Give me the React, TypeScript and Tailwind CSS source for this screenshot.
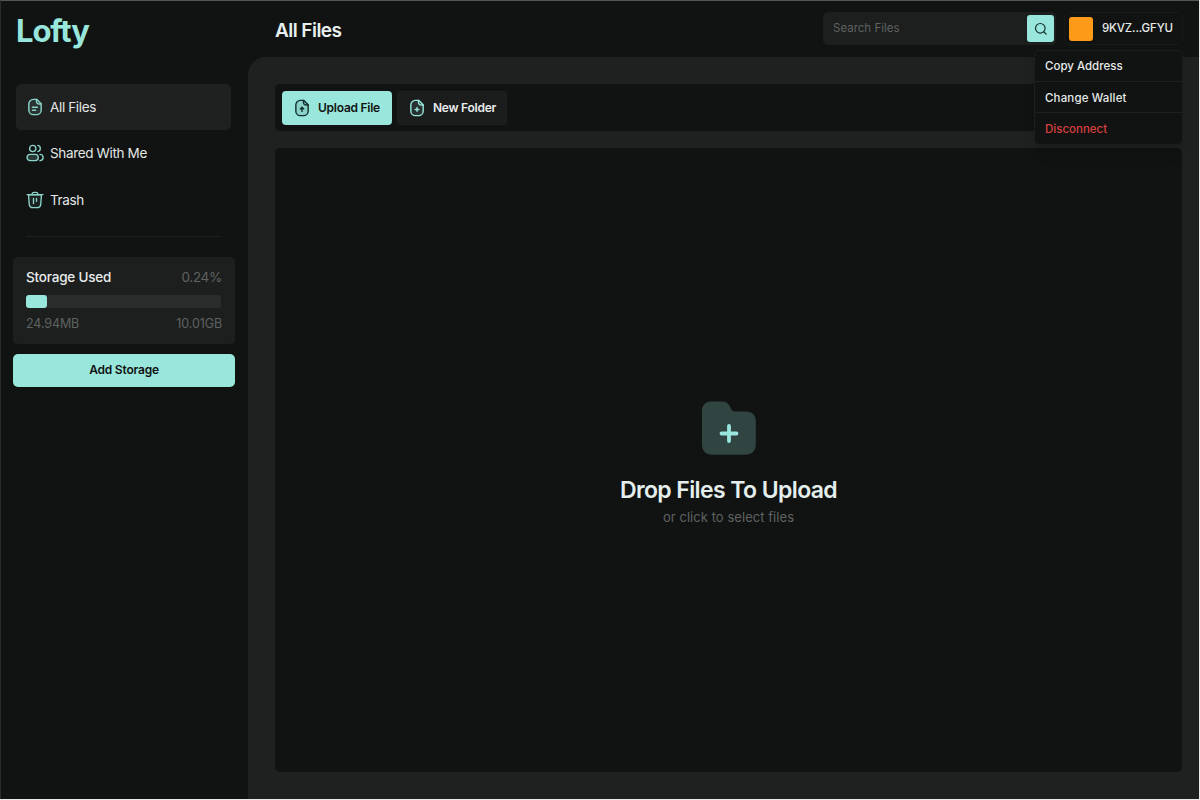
import type { ReactNode } from 'react';

const FILE_BODY = 'M9.8 1.8h4.4L20.2 7.8v8.4a6 6 0 0 1-6 6H9.8a6 6 0 0 1-6-6V7.8a6 6 0 0 1 6-6Z';
const FILE_FOLD = 'M14 2v2.6A3.4 3.4 0 0 0 17.4 8H20';

function FileIcon({ className, children }: { className?: string; children: ReactNode }) {
  return (
    <svg viewBox="0 0 24 24" fill="none" stroke="currentColor" strokeWidth="1.9" strokeLinecap="round" strokeLinejoin="round" className={className}>
      <path d={FILE_BODY} fill="currentColor" fillOpacity="0.1" />
      <path d={FILE_FOLD} />
      {children}
    </svg>
  );
}

function UsersIcon() {
  return (
    <svg viewBox="0 0 24 24" fill="none" stroke="currentColor" strokeWidth="1.8" strokeLinecap="round" strokeLinejoin="round" className="w-[18px] h-[18px]">
      <circle cx="9" cy="6" r="4.2" />
      <rect x="1.4" y="13.8" width="15" height="8.4" rx="4.2" fill="currentColor" fillOpacity="0.2" />
      <path d="M15.8 1.9a4.2 4.2 0 0 1 0 8.2" />
      <path d="M18.6 13.8a4.2 4.2 0 0 1 0 8.4" />
    </svg>
  );
}

function TrashIcon() {
  return (
    <svg viewBox="0 0 24 24" fill="none" stroke="currentColor" strokeWidth="1.8" strokeLinecap="round" strokeLinejoin="round" className="w-[18px] h-[18px]">
      <path d="M3.4 5.2l.9 12.3a5 5 0 0 0 5 4.7h5.4a5 5 0 0 0 5-4.7l.9-12.3Z" fill="currentColor" fillOpacity="0.08" />
      <path d="M1.4 4.8h21.2M7.8 4.4c.4-1.7 1.4-2.6 3-2.6h2.4c1.6 0 2.6.9 3 2.6" />
      <path d="M10 10v6.6M14 10v3.8" />
    </svg>
  );
}

function FolderIcon() {
  return (
    <svg viewBox="0 0 54 54" className="w-[54px] h-[54px]">
      <path d="M0 9a8.5 8.5 0 0 1 8.5-8.5H20c4 0 6.3 1.6 7.8 4.8l1 2.1c.9 2 2.4 3.1 4.7 3.1H44c6.2 0 9.8 3.6 9.8 9.6V43c0 7-4 10.8-10.8 10.8H10.5C3.8 53.8 0 50 0 43.5Z" fill="#304442" />
      <path d="M27 25v15M19.5 32.5h15" stroke="#98e6dc" strokeWidth="3.8" strokeLinecap="round" />
    </svg>
  );
}

const navItems = [
  {
    label: 'All Files',
    active: true,
    icon: (
      <FileIcon className="w-[18px] h-[18px]">
        <path d="M8.6 12.4h6.6M8.6 16.4h4.2" />
      </FileIcon>
    ),
  },
  { label: 'Shared With Me', active: false, icon: <UsersIcon /> },
  { label: 'Trash', active: false, icon: <TrashIcon /> },
];

function Sidebar() {
  return (
    <aside className="w-[248px] shrink-0 flex flex-col pl-3 pt-3">
      <div className="h-[42px] pl-[3px] text-[31px] leading-[36px] font-bold tracking-[-1.1px] text-[#98e6dc]">Lofty</div>

      <nav className="mt-[28.6px] ml-[3px] flex flex-col">
        {navItems.map((item) => (
          <a
            key={item.label}
            href="#"
            className={`flex items-center h-[46.6px] w-[215px] pl-[10px] gap-[6px] rounded-[5px] ${item.active ? 'bg-[#1f2120]' : ''}`}
          >
            <span className="text-[#8cd3ca]">{item.icon}</span>
            <span className="text-[13.5px] tracking-[-0.35px] text-[#e3e7e6]">{item.label}</span>
          </a>
        ))}
      </nav>

      <div className="ml-[13px] mt-[12.6px] h-px w-[195px] bg-[#1e201f]" />

      <section className="mt-5 h-[87px] w-[222px] rounded-[5px] bg-[#1d1f1e] px-[13px] pt-[11px]">
        <div className="flex justify-between text-[13.5px] leading-[18px]">
          <span className="font-medium tracking-[-0.2px] text-[#e8ecec]">Storage Used</span>
          <span className="tracking-[-0.3px] text-[#5e6261]">0.24%</span>
        </div>
        <div className="mt-[9px] h-[13px] w-[195px] rounded-[3px] bg-[#2a2d2c]">
          <div className="h-full w-[21px] rounded-[3px] bg-[#98e6dc]" />
        </div>
        <div className="mt-[7px] flex justify-between text-[12.5px] leading-[18px] tracking-[-0.1px] text-[#5e6261]">
          <span>24.94MB</span>
          <span>10.01GB</span>
        </div>
      </section>

      <button className="mt-[10px] h-[33px] w-[222px] rounded-[5px] bg-[#98e6dc] text-xs font-semibold tracking-[-0.2px] text-[#111312]">
        Add Storage
      </button>
    </aside>
  );
}

function WalletMenu() {
  return (
    <div className="absolute -right-px top-[37px] z-10 w-[149px] rounded-[5px] border border-[#1b1e1d] bg-[#111312] text-[11.5px] font-medium text-[#e6eae9] shadow-lg">
      <div className="h-[31px] px-[10px] leading-[30px] border-b border-[#1e201f]">Copy Address</div>
      <div className="h-[31px] px-[10px] leading-[32px] tracking-[0.15px] border-b border-[#1e201f]">Change Wallet</div>
      <div className="h-[31px] px-[10px] leading-[32px] text-[#d9403f]">Disconnect</div>
    </div>
  );
}

function Header() {
  return (
    <header className="flex h-14 shrink-0 items-start pl-[27px] pr-4">
      <h1 className="mt-4 text-[19px] leading-7 font-semibold tracking-[-0.55px] text-[#e8f0ef]">All Files</h1>
      <div className="ml-auto mt-[11px] flex items-center">
        <div className="flex h-[33px] w-[233px] items-center rounded-[5px] bg-[#1d1f1e] pl-[10px] pr-[2px]">
          <span className="pt-px text-[11.5px] text-[#5e6261]">Search Files</span>
          <button className="ml-auto flex h-[27px] w-[27px] items-center justify-center rounded-[3px] bg-[#98e6dc] text-[#16302d]">
            <svg viewBox="0 0 14 14" fill="none" stroke="currentColor" strokeWidth="1.2" strokeLinecap="round" className="h-[14px] w-[14px]">
              <circle cx="6.3" cy="6.3" r="4.8" />
              <path d="M10 10l2.2 2.2" />
            </svg>
          </button>
        </div>
        <div className="relative ml-2 flex h-[33px] w-[119px] items-center rounded-[5px] border border-[#171918] pl-1">
          <span className="h-6 w-6 shrink-0 rounded-[3px] bg-[#fd9a17]" />
          <span className="ml-[9px] pt-px text-[11.5px] font-medium tracking-[-0.15px] whitespace-nowrap text-[#e6eae9]">9KVZ...GFYU</span>
          <WalletMenu />
        </div>
      </div>
    </header>
  );
}

function Toolbar() {
  return (
    <div className="flex h-[47px] shrink-0 items-center gap-[5px] rounded-[5px] bg-[#111312] px-[7px]">
      <button className="flex h-[34px] w-[110px] items-center rounded-[4px] bg-[#98e6dc] pl-[11px] text-[#12302d]">
        <FileIcon className="w-[18px] h-[18px]">
          <path d="M12 16.5V11.5M9.8 13.2L12 11l2.2 2.2Z" fill="currentColor" />
        </FileIcon>
        <span className="ml-[7px] text-xs font-semibold tracking-[-0.25px] whitespace-nowrap text-[#111312]">Upload File</span>
      </button>
      <button className="flex h-[34px] w-[110px] items-center rounded-[4px] border border-[#1f2120] bg-[#1b1d1c] pl-[10px] text-[#98e6dc]">
        <FileIcon className="w-[18px] h-[18px]">
          <path d="M12 11.4v5M9.5 13.9h5" />
        </FileIcon>
        <span className="ml-[7px] text-xs font-semibold tracking-[-0.25px] whitespace-nowrap text-[#e8ecec]">New Folder</span>
      </button>
    </div>
  );
}

function DropZone() {
  return (
    <div className="mt-[17px] flex h-[624px] flex-col items-center rounded-[5px] bg-[#111312] pt-[253px]">
      <FolderIcon />
      <h2 className="mt-[19px] text-[23px] leading-8 font-semibold tracking-[-0.6px] text-[#e4eeec]">Drop Files To Upload</h2>
      <p className="mt-[1px] text-[13px] leading-5 tracking-[0.05px] text-[#5e6261]">or click to select files</p>
    </div>
  );
}

export default function App() {
  return (
    <div className="h-[800px] w-[1200px] overflow-hidden bg-[#e9ebea] pr-px pb-px font-['Inter','Liberation_Sans',sans-serif]">
      <div className="flex h-full border-t border-l border-t-[#535756] border-l-[#292c2b] bg-[#111312]">
        <Sidebar />
        <div className="flex flex-1 flex-col -ml-px">
          <Header />
          <main className="flex flex-1 flex-col rounded-tl-[18px] bg-[#1f2120] pt-[27px] pl-[27px] pr-[17px]">
            <Toolbar />
            <DropZone />
          </main>
        </div>
      </div>
    </div>
  );
}
